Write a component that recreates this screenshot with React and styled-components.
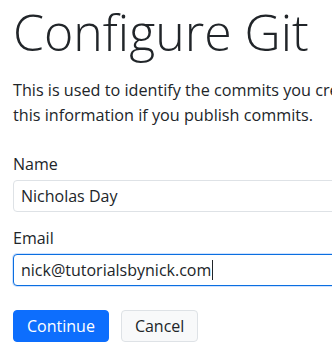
import styled, { createGlobalStyle } from 'styled-components';

const GlobalStyle = createGlobalStyle`
  html, body {
    margin: 0;
    background: #ffffff;
    overflow: hidden;
  }
  body {
    font-family: 'Open Sans', 'Noto Sans', sans-serif;
    color: #212529;
  }
`;

const Page = styled.main`
  width: 640px;
  padding: 4px 13px 0;
`;

const Title = styled.h1`
  margin: 0;
  font-size: 50px;
  font-weight: 300;
  line-height: 57px;
  color: #212529;
`;

const Intro = styled.p`
  margin: 17px 0 0;
  font-size: 16.2px;
  line-height: 25px;
`;

const Field = styled.div`
  display: flex;
  flex-direction: column;
  margin-top: ${({ first }) => (first ? '24px' : '14px')};
`;

const Label = styled.label`
  font-size: 16px;
  line-height: 24px;
  margin-bottom: 4px;
`;

const inputBox = `
  box-sizing: border-box;
  width: 100%;
  height: 32px;
  padding: 0 7px;
  font-family: 'Open Sans', 'Noto Sans', sans-serif;
  font-size: 16px;
  color: #212529;
  background: #fff;
  border-radius: 4px;
`;

const Input = styled.input`
  ${inputBox}
  border: 1px solid #dee2e6;
  outline: none;
`;

const FocusedInput = styled.div`
  ${inputBox}
  display: flex;
  align-items: center;
  border: 1px solid #0b6fe0;
  box-shadow: 0 0 0 1px #cfe2ff;
`;

const Caret = styled.span`
  display: inline-block;
  width: 1px;
  height: 20px;
  background: #212529;
  margin-left: 1px;
`;

const Actions = styled.div`
  display: flex;
  gap: 12px;
  margin-top: 24px;
`;

const Button = styled.button`
  height: 32px;
  padding: 0 13px;
  font-family: inherit;
  font-size: 16px;
  border-radius: 4px;
  cursor: pointer;
  color: ${({ primary }) => (primary ? '#ffffff' : '#212529')};
  background: ${({ primary }) => (primary ? '#0d6efd' : '#f8f9fa')};
  border: 1px solid ${({ primary }) => (primary ? '#0d6efd' : '#dee2e6')};
`;

export default function App() {
  return (
    <>
      <GlobalStyle />
      <Page>
        <Title>Configure Git</Title>
        <Intro>
          This is used to identify the commits you create. Anyone will be able to see
          <br />
          this information if you publish commits.
        </Intro>
        <Field first>
          <Label>Name</Label>
          <Input defaultValue="Nicholas Day" />
        </Field>
        <Field>
          <Label>Email</Label>
          <FocusedInput>
            nick@tutorialsbynick.com
            <Caret />
          </FocusedInput>
        </Field>
        <Actions>
          <Button primary>Continue</Button>
          <Button>Cancel</Button>
        </Actions>
      </Page>
    </>
  );
}
